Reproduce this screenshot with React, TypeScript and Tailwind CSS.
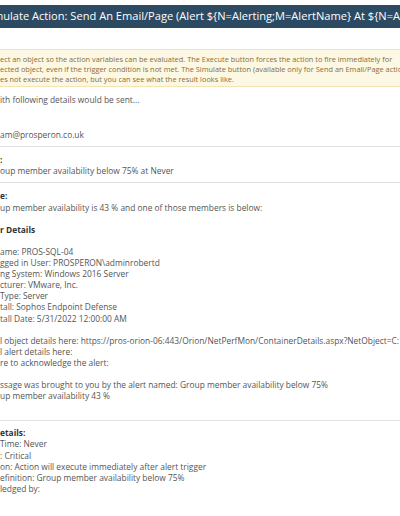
import React from 'react';

const TITLE = 'Simulate Action: Send An Email/Page (Alert ${N=Alerting;M=AlertName} At ${N=Alerting;M=AlertTriggerTime;F=DateTime})';

interface RowProps {
    cut?: string;
    bold?: boolean;
    children?: React.ReactNode;
}

// The dialog is cropped on the left: the start of each line sits in a hidden box
const Row: React.FC<RowProps> = ({ cut = '', bold = false, children }) => (
    <div className={`flex whitespace-nowrap ${bold ? 'font-bold text-[#333]' : ''}`}>
        <span className="flex w-[48px] shrink-0 justify-end overflow-hidden">{cut}</span>
        <span>{children}</span>
    </div>
);

const Blank = () => <div className="h-[11.1px]" />;

export default function App() {
    return (
        <div className="w-[400px] h-[516px] overflow-hidden bg-white pt-[5px] font-['Open_Sans',sans-serif]">
            {/* Title bar */}
            <div className="flex h-[23px] items-center bg-[#2c4a62]">
                <span className="-ml-[16px] whitespace-nowrap text-[11.1px] text-white">{TITLE}</span>
            </div>

            {/* Warning */}
            <div className="mt-[21px] border-y border-[#f3e3b5] bg-[#fcf8e3] pt-[4px] pb-[2px] text-[7.4px] leading-[10px] text-[#8a6d3b]">
                <div className="-ml-[48px]">
                    <Row cut="Sel">ect an object so the action variables can be evaluated. The Execute button forces the action to fire immediately for</Row>
                    <Row cut="the sel">ected object, even if the trigger condition is not met. The Simulate button (available only for Send an Email/Page action)</Row>
                    <Row cut="action) do">es not execute the action, but you can see what the result looks like.</Row>
                </div>
            </div>

            {/* Email preview */}
            <div className="-ml-[48px] text-[8.4px] leading-[11.1px] text-[#555]">
                <div className="mt-[7px] mb-[13px]">
                    <Row cut="Email w">ith following details would be sent...</Row>
                </div>

                <div className="border-b border-[#e2e2e2] pb-[6px]">
                    <Row cut="To:" bold />
                    <Row cut="ad">am@prosperon.co.uk</Row>
                </div>

                <div className="border-b border-[#e2e2e2] pt-[7px] pb-[6px]">
                    <Row cut="Subject" bold>:</Row>
                    <Row cut="Alert: Gr">oup member availability below 75% at Never</Row>
                </div>

                <div className="border-b border-[#e2e2e2] pt-[7px] pb-[8px]">
                    <Row cut="Messag" bold>e:</Row>
                    <Row cut="Gro">up member availability is 43 % and one of those members is below:</Row>
                    <Blank />
                    <Row cut="Compute" bold>r Details</Row>
                    <Blank />
                    <Row cut="Computer N">ame: PROS-SQL-04</Row>
                    <Row cut="Last Lo">gged in User: PROSPERON\adminrobertd</Row>
                    <Row cut="Operati">ng System: Windows 2016 Server</Row>
                    <Row cut="Manufa">cturer: VMware, Inc.</Row>
                    <Row cut="Machine ">Type: Server</Row>
                    <Row cut="AV Ins">tall: Sophos Endpoint Defense</Row>
                    <Row cut="AV Ins">tall Date: 5/31/2022 12:00:00 AM</Row>
                    <Blank />
                    <Row cut="View ful">l object details here: https://pros-orion-06:443/Orion/NetPerfMon/ContainerDetails.aspx?NetObject=C:10</Row>
                    <Row cut="View ful">l alert details here:</Row>
                    <Row cut="Click he">re to acknowledge the alert:</Row>
                    <Blank />
                    <Row cut="This me">ssage was brought to you by the alert named: Group member availability below 75%</Row>
                    <Row cut="Gro">up member availability 43 %</Row>
                    <Blank />
                </div>

                <div className="pt-[6px]">
                    <Row cut="Alert D" bold>etails:</Row>
                    <Row cut="Trigger ">Time: Never</Row>
                    <Row cut="Severity">: Critical</Row>
                    <Row cut="Escalati">on: Action will execute immediately after alert trigger</Row>
                    <Row cut="Alert D">efinition: Group member availability below 75%</Row>
                    <Row cut="Acknow">ledged by:</Row>
                </div>
            </div>
        </div>
    );
}
